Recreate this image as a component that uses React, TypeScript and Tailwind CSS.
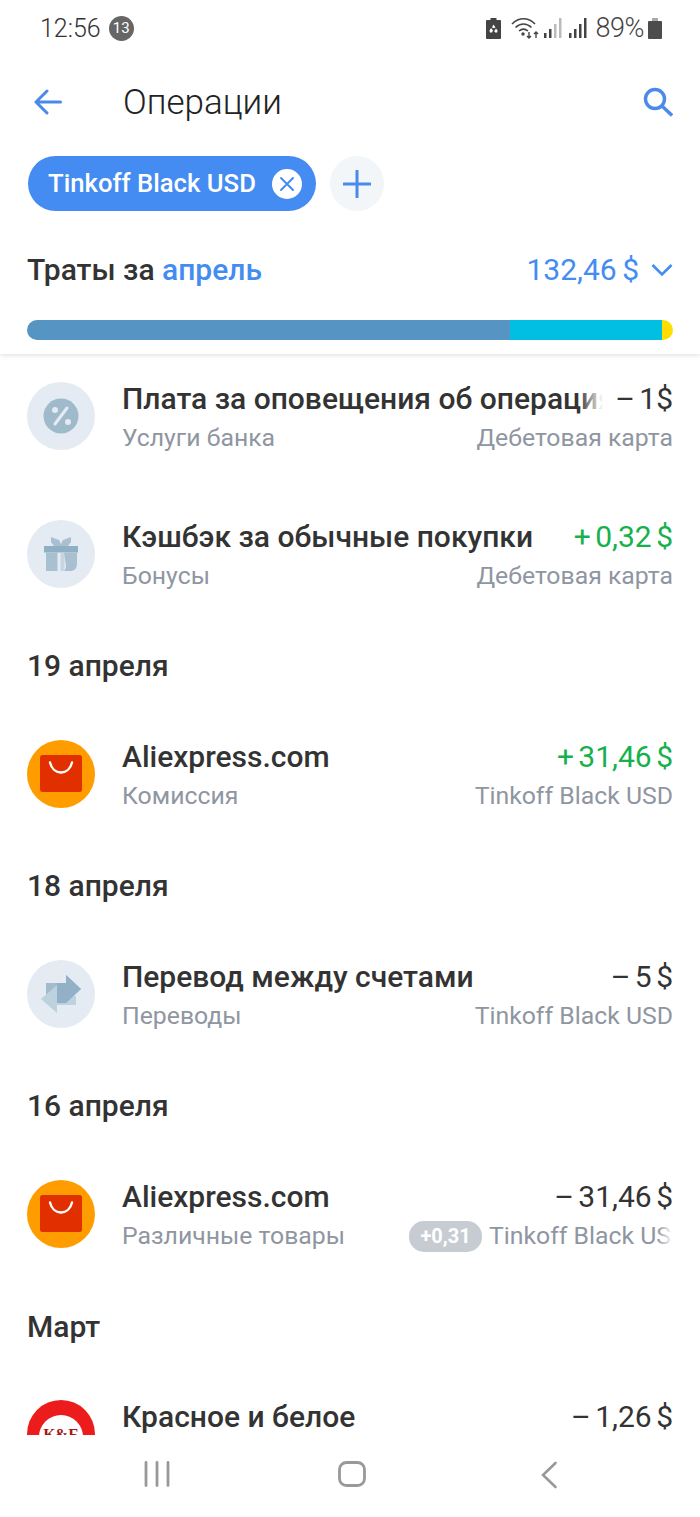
import React from "react";

const AliIcon = () => (
  <svg viewBox="0 0 68 68" className="w-[68px] h-[68px] shrink-0">
    <circle cx="34" cy="34" r="34" fill="#ff9c00" />
    <rect x="13" y="15" width="42" height="37" rx="2.5" fill="#e22f00" />
    <path d="M23 22.500c1.500 6.500 6 10 11 10s9.500-3.500 11-10" fill="none" stroke="#fff" strokeWidth="2.400" strokeLinecap="round" />
  </svg>
);

const PercentIcon = () => (
  <svg viewBox="0 0 68 68" className="w-[68px] h-[68px] shrink-0">
    <circle cx="34" cy="34" r="34" fill="#e4ebf3" />
    <circle cx="34" cy="34" r="17.500" fill="#9fbacb" />
    <circle cx="28" cy="28" r="3" fill="#e4ebf3" />
    <circle cx="41" cy="40" r="3" fill="#e4ebf3" />
    <path d="M28 42l12-16" stroke="#e4ebf3" strokeWidth="3" strokeLinecap="round" />
  </svg>
);

const GiftIcon = () => (
  <svg viewBox="0 0 68 68" className="w-[68px] h-[68px] shrink-0">
    <circle cx="34" cy="34" r="34" fill="#e4ebf3" />
    <path d="M24 17l8 3 2 4 2-4 8-3v5l-3 4H27l-3-4z" fill="#a9c0d1" />
    <rect x="17" y="26" width="34" height="6.500" fill="#8fafc4" />
    <path d="M19 32.500h11.500V51H19z" fill="#a9c0d1" />
    <path d="M33.500 32.500h4V51h-4z" fill="#c6d5e1" />
    <path d="M37 32.500h13v11c0 5-2.500 7.500-7 7.500h-6c1.500-1.500 2-3 2-5z" fill="#a9c0d1" />
  </svg>
);

const TransferIcon = () => (
  <svg viewBox="0 0 68 68" className="w-[68px] h-[68px] shrink-0">
    <circle cx="34" cy="34" r="34" fill="#e4ebf3" />
    <path d="M19 23h20v-8l15 14-15 14v-8H19z" fill="#a3bccd" />
    <path d="M14 39l16-14v11h19v9H30v8z" fill="#bdd1de" />
    <path d="M30 23h9v-8l15 14-15 14H30z" fill="#93b1c6" />
  </svg>
);

const KbIcon = () => (
  <svg viewBox="0 0 68 68" className="w-[68px] h-[68px] shrink-0">
    <circle cx="34" cy="34" r="34" fill="#ed1c1c" />
    <circle cx="34" cy="37" r="22" fill="#fff" />
    <text x="34" y="39.500" textAnchor="middle" fontFamily="'Liberation Serif', serif" fontWeight="700" fontSize="16" fill="#a81616">К&amp;Б</text>
  </svg>
);

type RowProps = {
  icon: React.ReactNode;
  title: string;
  sub: string;
  amount: string;
  right: string;
  green?: boolean;
  fadeTitle?: boolean;
  badge?: string;
  fadeRight?: boolean;
};

const Row = ({ icon, title, sub, amount, right, green, fadeTitle, badge, fadeRight }: RowProps) => (
  <div className="flex items-start pl-[27px] pr-[27px] py-[20px] h-[108px] shrink-0">
    {icon}
    <div className="ml-[27px] flex-1 min-w-0 flex flex-col">
      <div className="flex items-center h-[34px]">
        <div className="relative flex-1 min-w-0 overflow-hidden whitespace-nowrap text-[30px] font-medium text-[#333333] leading-[34px]">
          {title}
          {fadeTitle && (
            <div className="absolute right-0 top-0 bottom-0 w-[24px] bg-gradient-to-r from-white/0 to-white" />
          )}
        </div>
        <div className={`ml-[12px] shrink-0 whitespace-nowrap text-[30px] leading-[34px] [word-spacing:-3px] ${green ? "text-[#16b14c]" : "text-[#333333]"}`}>
          {amount}
        </div>
      </div>
      <div className="flex items-center justify-between h-[34px] mt-[5px]">
        <div className="whitespace-nowrap text-[24.8px] leading-[34px] text-[#8f96a1]">{sub}</div>
        <div className="flex items-center min-w-0">
          {badge && (
            <div className="shrink-0 mr-[7px] rounded-[15px] h-[31px] w-[73px] flex items-center justify-center bg-[#c7ccd3] text-white text-[20px] font-bold">
              {badge}
            </div>
          )}
          {fadeRight ? (
            <div className="relative w-[184px] overflow-hidden whitespace-nowrap text-[24.8px] leading-[34px] text-[#8f96a1]">
              {right}
              <div className="absolute right-0 top-0 bottom-0 w-[16px] bg-gradient-to-r from-white/0 to-white" />
            </div>
          ) : (
            <div className="whitespace-nowrap text-[24.8px] leading-[34px] text-[#8f96a1]">{right}</div>
          )}
        </div>
      </div>
    </div>
  </div>
);

const Section = ({ children }: { children: React.ReactNode }) => (
  <div className="pl-[27px] pt-[40px] pb-[36px] h-[112px] shrink-0 text-[30px] leading-[36px] font-medium text-[#333333]">
    {children}
  </div>
);

const StatusIcons = () => (
  <div className="flex items-center">
    <svg viewBox="0 0 15 21" className="w-[15px] h-[21px]">
      <path d="M4.500 0h6v2H14a1 1 0 0 1 1 1v17a1 1 0 0 1-1 1H1a1 1 0 0 1-1-1V3a1 1 0 0 1 1-1h3.500z" fill="#444" />
      <path d="M7.500 6.500l2 3-2 .8-1.500-1zM3.500 12.500l1.500-2.500 2 2.500-1 2H4zM11.500 12.500l-1.500-2-1.800 2.700 1 1.300h2z" fill="#fff" />
    </svg>
    <svg viewBox="0 0 28 22" className="w-[28px] h-[22px] ml-[10px]">
      <path d="M1 7c7-7 16-7 23 0M4.500 10.500c5-4.500 11-4.500 16 0M8 14c3-2.500 6-2.500 9 0" fill="none" stroke="#444" strokeWidth="1.600" />
      <circle cx="12" cy="17" r="1.700" fill="#444" />
      <path d="M18 15v6M16 19l2 2 2-2M25 21v-6M23 17l2-2 2 2" fill="none" stroke="#444" strokeWidth="1.400" />
    </svg>
    <svg viewBox="0 0 18 20" className="w-[18px] h-[20px] ml-[5px]">
      <rect x="0" y="15" width="2.500" height="5" fill="#444" />
      <rect x="5" y="11" width="2.500" height="9" fill="#444" />
      <rect x="10" y="6" width="2.500" height="14" fill="#bbb" />
      <rect x="15" y="0" width="2.500" height="20" fill="#bbb" />
    </svg>
    <svg viewBox="0 0 18 20" className="w-[18px] h-[20px] ml-[7px]">
      <rect x="0" y="15" width="2.500" height="5" fill="#444" />
      <rect x="5" y="11" width="2.500" height="9" fill="#444" />
      <rect x="10" y="6" width="2.500" height="14" fill="#444" />
      <rect x="15" y="0" width="2.500" height="20" fill="#444" />
    </svg>
    <span className="ml-[9px] text-[27px] font-light text-[#444] leading-none tracking-[-0.5px]">89%</span>
    <svg viewBox="0 0 14 21" className="w-[14px] h-[21px] ml-[4px]">
      <rect x="4" y="0" width="6" height="3" fill="#aaa" />
      <rect x="0" y="3" width="14" height="18" rx="1" fill="#4c4c4c" />
    </svg>
  </div>
);

export default function App() {
  return (
    <div className="w-[700px] h-[1517px] bg-white flex flex-col overflow-hidden font-['Roboto',sans-serif]">
      <div className="relative z-10 h-[354px] shrink-0 bg-white shadow-[0_1px_5px_rgba(0,0,0,0.14)] flex flex-col">
        <div className="h-[56px] flex items-center justify-between pl-[40px] pr-[38px]">
          <div className="flex items-center">
            <span className="text-[25px] font-light text-[#333] leading-none">12:56</span>
            <span className="ml-[8px] w-[25px] h-[25px] rounded-full bg-[#666] text-white text-[15px] flex items-center justify-center">13</span>
          </div>
          <StatusIcons />
        </div>
        <div className="h-[94px] flex items-center pl-[34px] pr-[27px] -mt-[1px]">
          <svg viewBox="0 0 28 26" className="w-[28px] h-[26px]">
            <path d="M26.500 13H2M13 2L2 13l11 11" fill="none" stroke="#4a8ae8" strokeWidth="3" strokeLinecap="round" strokeLinejoin="round" />
          </svg>
          <div className="ml-[61px] text-[35px] font-light text-[#222] leading-none flex-1">Операции</div>
          <svg viewBox="0 0 30 30" className="w-[30px] h-[30px]">
            <circle cx="12" cy="12" r="9.500" fill="none" stroke="#4a8ae8" strokeWidth="3.400" />
            <path d="M19 19l10 9.500" fill="none" stroke="#4a8ae8" strokeWidth="3.400" />
          </svg>
        </div>
        <div className="flex items-center pl-[28px] mt-[7px]">
          <div className="h-[55px] w-[288px] rounded-full bg-[#448cf2] flex items-center pl-[20px] pr-[14px] justify-between">
            <span className="text-white text-[25.7px] font-medium whitespace-nowrap">Tinkoff Black USD</span>
            <span className="w-[30px] h-[30px] rounded-full bg-white flex items-center justify-center">
              <svg viewBox="0 0 16 16" className="w-[16px] h-[16px]">
                <path d="M2 2l12 12M14 2L2 14" stroke="#448cf2" strokeWidth="2" strokeLinecap="round" />
              </svg>
            </span>
          </div>
          <div className="ml-[14px] w-[54px] h-[55px] rounded-full bg-[#f3f6f9] flex items-center justify-center">
            <svg viewBox="0 0 28 28" className="w-[28px] h-[28px]">
              <path d="M14 1v26M1 14h26" stroke="#4a8ae8" strokeWidth="3" strokeLinecap="round" />
            </svg>
          </div>
        </div>
        <div className="flex items-center justify-between pl-[27px] pr-[27px] mt-[39px] h-[40px]">
          <div className="text-[30px] font-medium text-[#333] whitespace-nowrap leading-none">
            Траты за <span className="text-[#448cf2]">апрель</span>
          </div>
          <div className="flex items-center">
            <span className="text-[30px] text-[#448cf2] leading-none [word-spacing:-2px]">132,46 $</span>
            <svg viewBox="0 0 22 14" className="w-[22px] h-[14px] ml-[12px]">
              <path d="M1.500 2L11 11.500 20.500 2" fill="none" stroke="#448cf2" strokeWidth="2.600" />
            </svg>
          </div>
        </div>
        <div className="mx-[27px] mt-[30px] h-[20px] rounded-full overflow-hidden flex">
          <div className="w-[483px] bg-[#5694c3]" />
          <div className="w-[152px] bg-[#00bfe3]" />
          <div className="flex-1 bg-[#ffdd00]" />
        </div>
      </div>

      <div className="h-[1081px] shrink-0 overflow-hidden flex flex-col pt-[8px]">
        <Row icon={<PercentIcon />} title="Плата за оповещения об операциях" sub="Услуги банка" amount="– 1$" right="Дебетовая карта" fadeTitle />
        <div className="h-[30px] shrink-0" />
        <Row icon={<GiftIcon />} title="Кэшбэк за обычные покупки" sub="Бонусы" amount="+ 0,32 $" right="Дебетовая карта" green />
        <Section>19 апреля</Section>
        <Row icon={<AliIcon />} title="Aliexpress.com" sub="Комиссия" amount="+ 31,46 $" right="Tinkoff Black USD" green />
        <Section>18 апреля</Section>
        <Row icon={<TransferIcon />} title="Перевод между счетами" sub="Переводы" amount="– 5 $" right="Tinkoff Black USD" />
        <Section>16 апреля</Section>
        <Row icon={<AliIcon />} title="Aliexpress.com" sub="Различные товары" amount="– 31,46 $" right="Tinkoff Black USD" badge="+0,31" fadeRight />
        <div className="pl-[27px] pt-[41px] pb-[35px] h-[112px] shrink-0 text-[30px] leading-[36px] font-medium text-[#333333]">Март</div>
        <Row icon={<KbIcon />} title="Красное и белое" sub="" amount="– 1,26 $" right="" />
      </div>

      <div className="h-[82px] shrink-0 bg-white flex pt-[26px]">
        <div className="w-[314px] flex justify-center h-[28px]">
          <svg viewBox="0 0 26 26" className="w-[26px] h-[26px]">
            <path d="M2 1.500v23M13 1.500v23M24 1.500v23" stroke="#999" strokeWidth="2.800" strokeLinecap="round" />
          </svg>
        </div>
        <div className="w-[76px] flex justify-center h-[28px]">
          <svg viewBox="0 0 28 26" className="w-[28px] h-[26px]">
            <rect x="1.500" y="1.500" width="25" height="23" rx="7" fill="none" stroke="#999" strokeWidth="2.800" />
          </svg>
        </div>
        <div className="pl-[150px] flex h-[28px]">
          <svg viewBox="0 0 18 28" className="w-[18px] h-[28px]">
            <path d="M15.500 2L3 14l12.500 12" fill="none" stroke="#999" strokeWidth="2.600" strokeLinecap="round" />
          </svg>
        </div>
      </div>
    </div>
  );
}
